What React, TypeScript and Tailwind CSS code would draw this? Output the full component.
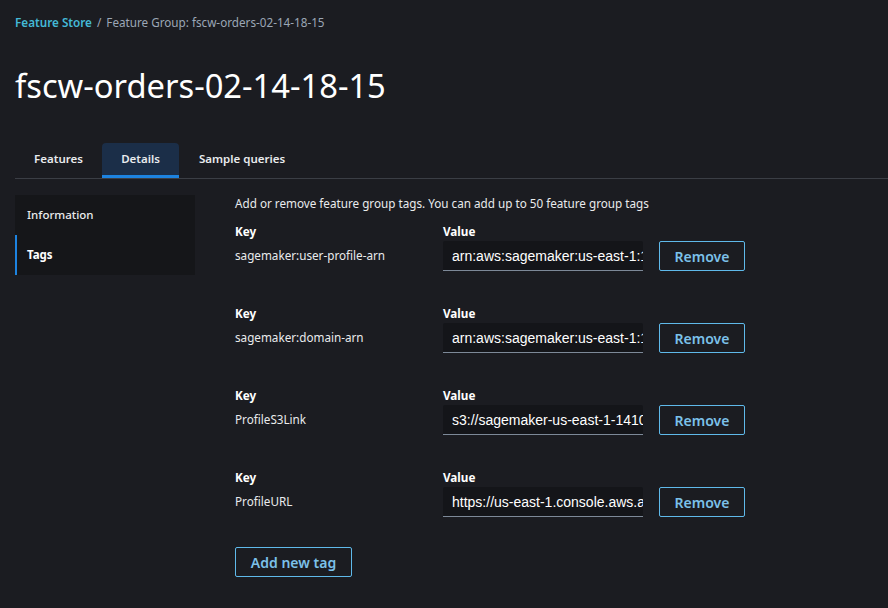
import React from "react";

const rows = [
  { key: "sagemaker:user-profile-arn", value: "arn:aws:sagemaker:us-east-1:111122223333:user-profile/d-xyz/abc" },
  { key: "sagemaker:domain-arn", value: "arn:aws:sagemaker:us-east-1:111122223333:domain/d-xyz" },
  { key: "ProfileS3Link", value: "s3://sagemaker-us-east-1-141000000000/profile" },
  { key: "ProfileURL", value: "https://us-east-1.console.aws.amazon.com/sagemaker" },
];

export default function App() {
  return (
    <div
      className="w-[888px] h-[608px] bg-[#1b1c21] text-[#e9ebed] overflow-hidden"
      style={{ fontFamily: '"Noto Sans", "Open Sans", sans-serif' }}
    >
      <div className="pl-[15px] pt-[13px]">
        <div className="text-[11.7px] leading-[18px] text-[#9ba7b6]">
          <span className="text-[#44b9d6] font-semibold">Feature Store</span>
          <span className="mx-[5px]">/</span>
          <span>Feature Group: fscw-orders-02-14-18-15</span>
        </div>
        <h1 className="mt-[35px] text-[32.7px] leading-[40px] text-white font-normal">
          fscw-orders-02-14-18-15
        </h1>
      </div>

      <div className="ml-[15px] mt-[37px] flex border-b border-[#3b3e45] h-[36px]">
        <div className="w-[87px] flex items-center justify-center pb-[3px] text-[11.5px] font-semibold text-[#e9ebed]">Features</div>
        <div className="w-[77px] flex items-center justify-center text-[11.5px] font-semibold text-[#e9ebed] bg-[#1b2e48] rounded-t-[4px] border-b-[3px] border-[#1d83e0]">
          Details
        </div>
        <div className="px-[20px] flex items-center pb-[3px] text-[11.5px] font-semibold text-[#e9ebed]">Sample queries</div>
      </div>

      <div className="flex mt-[16px] pl-[15px]">
        <div className="w-[180px] h-[80px] bg-[#151619] flex flex-col shrink-0">
          <div className="h-[40px] flex items-center pl-[12px] text-[11.5px] font-medium text-[#e9ebed]">Information</div>
          <div className="h-[40px] flex items-center pl-[10px] border-l-[2px] border-[#1d83e0] text-[11.5px] font-bold text-white">Tags</div>
        </div>

        <div className="ml-[40px] flex flex-col">
          <div className="text-[11.7px] leading-[16px] text-[#e9ebed]">
            Add or remove feature group tags. You can add up to 50 feature group tags
          </div>
          <div className="flex flex-col mt-[12px] gap-[34px]">
            {rows.map((r) => (
              <div key={r.key} className="flex items-end">
                <div className="w-[208px] flex flex-col">
                  <div className="text-[11.7px] leading-[16px] font-bold text-white">Key</div>
                  <div className="h-[30px] mt-[2px] flex items-center text-[11.7px] text-[#e9ebed]">{r.key}</div>
                </div>
                <div className="w-[200px] flex flex-col">
                  <div className="text-[11.7px] leading-[16px] font-bold text-white">Value</div>
                  <input
                    readOnly
                    value={r.value}
                    className="h-[30px] mt-[2px] w-[200px] bg-[#141519] border-b border-[#7d8998] rounded-t-[2px] pl-[9px] pr-0 outline-none text-[14px] text-white"
                    style={{ fontFamily: '"Liberation Sans", Arial, sans-serif' }}
                  />
                </div>
                <button className="ml-[16px] w-[86px] h-[30px] border border-[#5fb9ea] rounded-[2px] text-[14px] font-semibold text-[#7cc1ea] bg-transparent">
                  Remove
                </button>
              </div>
            ))}
          </div>
          <button className="mt-[30px] w-[117px] h-[30px] border border-[#5fb9ea] rounded-[2px] text-[14px] font-semibold text-[#7cc1ea] bg-transparent">
            Add new tag
          </button>
        </div>
      </div>
    </div>
  );
}
